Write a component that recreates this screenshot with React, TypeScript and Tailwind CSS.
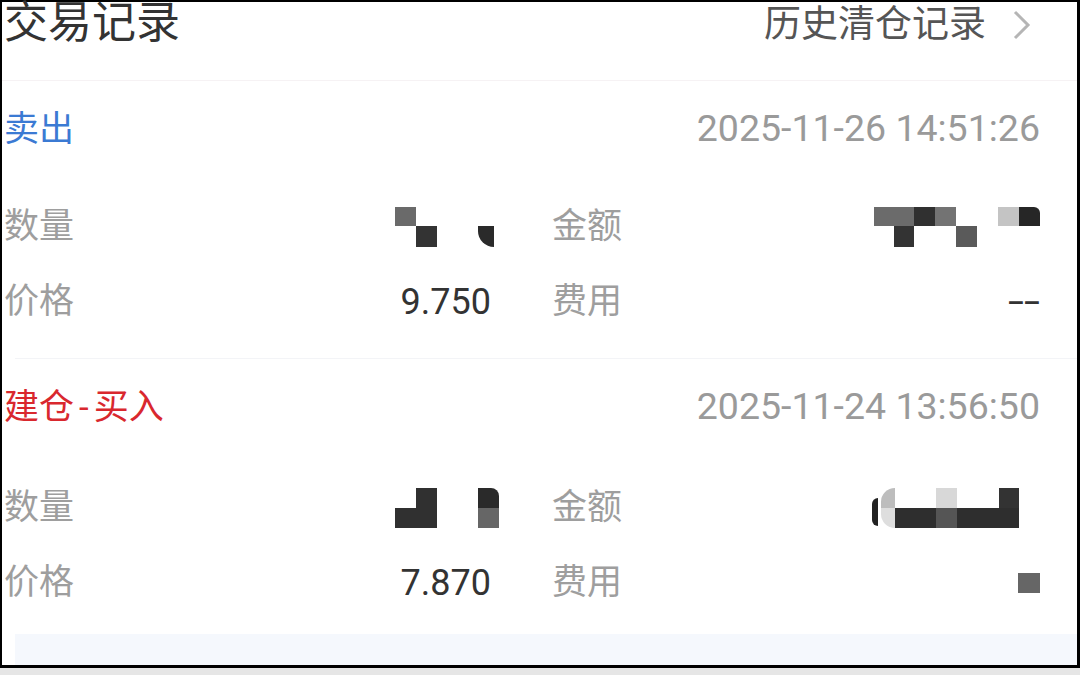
import React from 'react';

type Cell = { x: number; y: number; w: number; h: number; c: string; r?: string };

const font = { fontFamily: 'Roboto, "Noto Sans CJK SC", sans-serif' };

// pixelated (mosaic) value that hides the real number
function Mosaic({ w, h, cells, className = '' }: { w: number; h: number; cells: Cell[]; className?: string }) {
  return (
    <div className={`relative shrink-0 ${className}`} style={{ width: w, height: h }}>
      {cells.map((b, i) => (
        <div
          key={i}
          className={`absolute ${b.r ?? ''}`}
          style={{ left: b.x, top: b.y, width: b.w, height: b.h, background: b.c }}
        />
      ))}
    </div>
  );
}

function Row({ l1, v1, l2, v2 }: { l1: string; v1: React.ReactNode; l2: string; v2: React.ReactNode }) {
  return (
    <div className="flex h-[75px] items-center">
      <div className="flex w-[487px] items-center justify-between">
        <span className="text-[35px] leading-none text-[#9e9e9e]">{l1}</span>
        <div className="flex items-center text-[36px] leading-none text-[#333]">{v1}</div>
      </div>
      <div className="ml-[61px] flex flex-1 items-center justify-between">
        <span className="text-[35px] leading-none text-[#9e9e9e]">{l2}</span>
        <div className="flex items-center text-[36px] leading-none text-[#333]">{v2}</div>
      </div>
    </div>
  );
}

function Record({
  type,
  color,
  time,
  top,
  rows,
}: {
  type: React.ReactNode;
  color: string;
  time: string;
  top: string;
  rows: [string, React.ReactNode, string, React.ReactNode][];
}) {
  return (
    <div className={`pl-[2px] pr-[37px] ${top}`}>
      <div className="flex h-[96px] items-center justify-between">
        <span className={`text-[35px] leading-none ${color}`}>{type}</span>
        <span className="text-[37.5px] leading-none text-[#9a9a9a]">{time}</span>
      </div>
      {rows.map((r, i) => (
        <Row key={i} l1={r[0]} v1={r[1]} l2={r[2]} v2={r[3]} />
      ))}
    </div>
  );
}

export default function App() {
  return (
    <div className="flex h-[675px] w-[1080px] flex-col overflow-hidden bg-[#e6e6e6]" style={font}>
      <div className="flex h-[668px] flex-col border-b-[3px] border-l-2 border-r-[3px] border-t-2 border-black bg-white">
        {/* header */}
        <div className="flex h-[78px] items-start justify-between pl-[2px] pr-[45px]">
          <span className="mt-[-1px] text-[44px] leading-none text-[#333]">交易记录</span>
          <div className="mt-[4px] flex items-center gap-[26px]">
            <span className="text-[37px] leading-none text-[#555]">历史清仓记录</span>
            <svg width="20" height="30" viewBox="0 0 20 30" fill="none">
              <polyline points="3,2 16,15 3,28" stroke="#b5b5b5" strokeWidth="3" />
            </svg>
          </div>
        </div>
        <div className="h-px bg-[#f6f2f4]" />

        <Record
          type="卖出"
          color="text-[#3b7ad3]"
          time="2025-11-26 14:51:26"
          top="[&>div:nth-child(2)]:mt-[12px] pb-[19px]"
          rows={[
            [
              '数量',
              <Mosaic
                className="mr-[-4px]"
                w={100}
                h={40}
                cells={[
                  { x: 0, y: 0, w: 21, h: 19, c: '#6a6a6a' },
                  { x: 21, y: 19, w: 21, h: 21, c: '#333' },
                  { x: 83, y: 19, w: 16, h: 21, c: '#2a2a2a', r: 'rounded-bl-[16px]' },
                ]}
              />,
              '金额',
              <Mosaic
                w={166}
                h={40}
                cells={[
                  { x: 0, y: 0, w: 40, h: 19, c: '#6b6b6b' },
                  { x: 40, y: 0, w: 21, h: 19, c: '#303030' },
                  { x: 61, y: 0, w: 21, h: 19, c: '#737373' },
                  { x: 124, y: 0, w: 21, h: 19, c: '#c4c4c4' },
                  { x: 145, y: 0, w: 21, h: 19, c: '#262626', r: 'rounded-tr-[6px]' },
                  { x: 20, y: 19, w: 20, h: 21, c: '#333' },
                  { x: 82, y: 19, w: 21, h: 21, c: '#5a5a5a' },
                ]}
              />,
            ],
            [
              '价格',
              <span>9.750</span>,
              '费用',
              <span className="inline-block origin-right scale-x-[1.6]">--</span>,
            ],
          ]}
        />
        <div className="ml-[13px] h-px bg-[#f3f4f7]" />

        <Record
          type={
            <>
              建仓<span className="mx-[5px]">-</span>买入
            </>
          }
          color="text-[#d9282e]"
          time="2025-11-24 13:56:50"
          top="[&>div:nth-child(2)]:mt-[15px] pb-[14px]"
          rows={[
            [
              '数量',
              <Mosaic
                className="mr-[-9px]"
                w={105}
                h={40}
                cells={[
                  { x: 0, y: 20, w: 42, h: 20, c: '#303030' },
                  { x: 21, y: 0, w: 21, h: 20, c: '#303030' },
                  { x: 83, y: 0, w: 21, h: 20, c: '#2a2a2a', r: 'rounded-tr-[8px]' },
                  { x: 83, y: 20, w: 21, h: 20, c: '#666' },
                ]}
              />,
              '金额',
              <Mosaic
                w={170}
                h={40}
                cells={[
                  { x: 2, y: 10, w: 6, h: 28, c: '#222', r: 'rounded-l-full' },
                  { x: 11, y: 0, w: 14, h: 20, c: '#bdbdbd', r: 'rounded-tl-full' },
                  { x: 11, y: 20, w: 14, h: 20, c: '#dedede', r: 'rounded-bl-full' },
                  { x: 25, y: 20, w: 124, h: 20, c: '#2e2e2e' },
                  { x: 66, y: 20, w: 21, h: 20, c: '#555' },
                  { x: 66, y: 0, w: 21, h: 20, c: '#d8d8d8' },
                  { x: 129, y: 0, w: 20, h: 20, c: '#333' },
                ]}
              />,
            ],
            [
              '价格',
              <span>7.870</span>,
              '费用',
              <Mosaic w={22} h={20} cells={[{ x: 0, y: 0, w: 22, h: 20, c: '#666' }]} />,
            ],
          ]}
        />

        <div className="ml-[13px] flex-1 bg-[#f5f8fd]" />
      </div>
    </div>
  );
}
